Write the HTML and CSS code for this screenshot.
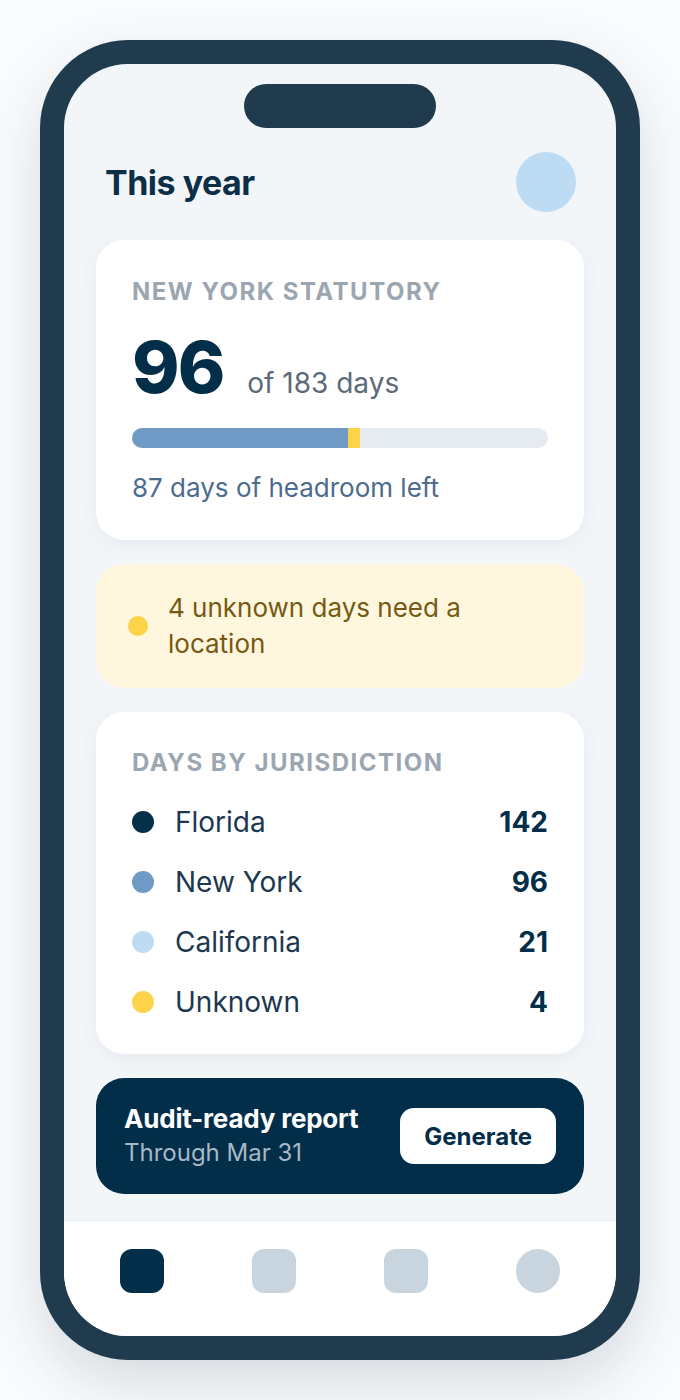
FILE: index.html
```html
<!DOCTYPE html>
<html>
  <head>
    <title>This year</title>
    <link rel="stylesheet" href="styles.css">
  </head>
  <body>
    <div class="phone">
      <div class="screen">
        <div class="island"></div>

        <header class="top-bar">
          <h1>This year</h1>
          <div class="avatar"></div>
        </header>

        <main class="content">
          <section class="card limit-card">
            <div class="eyebrow">New York statutory</div>
            <div class="count-row">
              <span class="count">96</span>
              <span class="count-of">of 183 days</span>
            </div>
            <div class="bar">
              <div class="bar-fill" style="width: 51.9%"></div>
              <div class="bar-unknown" style="width: 2.9%"></div>
            </div>
            <div class="headroom">87 days of headroom left</div>
          </section>

          <section class="card alert-card">
            <span class="dot dot-unknown"></span>
            <span class="alert-text">4 unknown days need a location</span>
          </section>

          <section class="card list-card">
            <div class="eyebrow">Days by jurisdiction</div>
            <ul class="juris-list">
              <li class="juris-row">
                <span class="dot dot-fl"></span>
                <span class="juris-name">Florida</span>
                <span class="juris-days">142</span>
              </li>
              <li class="juris-row">
                <span class="dot dot-ny"></span>
                <span class="juris-name">New York</span>
                <span class="juris-days">96</span>
              </li>
              <li class="juris-row">
                <span class="dot dot-ca"></span>
                <span class="juris-name">California</span>
                <span class="juris-days">21</span>
              </li>
              <li class="juris-row">
                <span class="dot dot-unknown"></span>
                <span class="juris-name">Unknown</span>
                <span class="juris-days">4</span>
              </li>
            </ul>
          </section>

          <section class="report-card">
            <div class="report-text">
              <div class="report-title">Audit-ready report</div>
              <div class="report-sub">Through Mar 31</div>
            </div>
            <button class="btn-generate">Generate</button>
          </section>
        </main>

        <nav class="tab-bar">
          <span class="tab tab-active"></span>
          <span class="tab"></span>
          <span class="tab"></span>
          <span class="tab tab-round"></span>
        </nav>
      </div>
    </div>
  </body>
</html>
```

FILE: styles.css
```css
body {
  font-family: "Inter", "Liberation Sans", sans-serif;
  background-color: #fafbfc;
  margin: 0;
  padding: 40px;
  color: #0d2e47;
}

.phone {
  width: 600px;
  height: 1320px;
  box-sizing: border-box;
  padding: 24px;
  background-color: #203a4e;
  border-radius: 88px;
  box-shadow: 0 24px 60px rgba(32, 58, 78, 0.16);
}

.screen {
  height: 1272px;
  border-radius: 64px;
  overflow: hidden;
  background-color: #f3f6f9;
  display: flex;
  flex-direction: column;
}

.island {
  width: 192px;
  height: 44px;
  margin: 20px auto 0;
  border-radius: 22px;
  background-color: #203a4e;
}

.top-bar {
  display: flex;
  align-items: center;
  justify-content: space-between;
  height: 60px;
  margin-top: 24px;
  padding: 0 40px 0 41px;
}

.top-bar h1 {
  margin: 0;
  font-size: 34px;
  font-weight: 700;
  letter-spacing: -0.5px;
  color: #0d2e47;
}

.avatar {
  width: 60px;
  height: 60px;
  border-radius: 50%;
  background-color: #bddcf4;
}

.content {
  display: flex;
  flex-direction: column;
  gap: 24px;
  padding: 28px 32px 0;
}

.card {
  background-color: #fff;
  border-radius: 28px;
  box-shadow: 0 6px 20px rgba(20, 50, 80, 0.06);
}

.eyebrow {
  font-size: 24px;
  line-height: 28px;
  font-weight: 700;
  letter-spacing: 1.5px;
  text-transform: uppercase;
  color: #9ba6b1;
}

/* statutory limit */
.limit-card {
  padding: 38px 36px 36px;
}

.count-row {
  display: flex;
  align-items: baseline;
  gap: 24px;
  margin-top: 25px;
}

.count {
  font-size: 72px;
  line-height: 72px;
  font-weight: 800;
  letter-spacing: -2px;
  color: #032e4a;
}

.count-of {
  font-size: 28px;
  color: #5c6a79;
}

.bar {
  display: flex;
  height: 20px;
  margin-top: 25px;
  border-radius: 10px;
  overflow: hidden;
  background-color: #e6ebf2;
}

.bar-fill {
  background-color: #6f9ac6;
}

.bar-unknown {
  background-color: #fdd34a;
}

.headroom {
  margin-top: 24px;
  font-size: 26px;
  line-height: 32px;
  color: #4c6b8d;
}

/* unknown days alert */
.alert-card {
  display: flex;
  align-items: center;
  gap: 20px;
  padding: 26px 36px 26px 32px;
  background-color: #fff6de;
  box-shadow: none;
}

.alert-text {
  font-size: 26px;
  line-height: 36px;
  color: #765913;
}

.dot {
  flex: none;
  width: 20px;
  height: 20px;
  border-radius: 50%;
}

.dot-fl {
  background-color: #062f4a;
}

.dot-ny {
  background-color: #6f9ac6;
}

.dot-ca {
  background-color: #bddcf4;
}

.dot-unknown {
  background-color: #fdd34a;
}

/* jurisdiction list */
.list-card {
  padding: 37px 36px 22px;
}

.juris-list {
  list-style: none;
  margin: 15px 0 0;
  padding: 0;
}

.juris-row {
  display: flex;
  align-items: center;
  height: 60px;
}

.juris-row .dot {
  width: 22px;
  height: 22px;
}

.juris-name {
  flex: 1;
  margin-left: 21px;
  font-size: 28px;
  color: #1c3850;
}

.juris-days {
  font-size: 28px;
  font-weight: 700;
  color: #032e4a;
}

/* report */
.report-card {
  display: flex;
  align-items: center;
  justify-content: space-between;
  height: 116px;
  box-sizing: border-box;
  padding: 0 28px;
  border-radius: 28px;
  background-color: #032e4a;
}

.report-title {
  font-size: 26px;
  line-height: 34px;
  font-weight: 700;
  letter-spacing: -0.2px;
  color: #fff;
}

.report-sub {
  font-size: 24px;
  line-height: 34px;
  color: #a8b8c5;
}

.btn-generate {
  height: 56px;
  padding: 0 24px;
  border: none;
  border-radius: 14px;
  background-color: #fff;
  font-family: inherit;
  font-size: 24px;
  font-weight: 700;
  color: #032e4a;
}

/* bottom tabs */
.tab-bar {
  display: flex;
  justify-content: space-between;
  margin-top: auto;
  padding: 28px 56px 43px;
  border-top: 1px solid #e6eaee;
  background-color: #fff;
}

.tab {
  width: 44px;
  height: 44px;
  border-radius: 12px;
  background-color: #c8d4de;
}

.tab-active {
  background-color: #032e4a;
}

.tab-round {
  border-radius: 50%;
}
```
